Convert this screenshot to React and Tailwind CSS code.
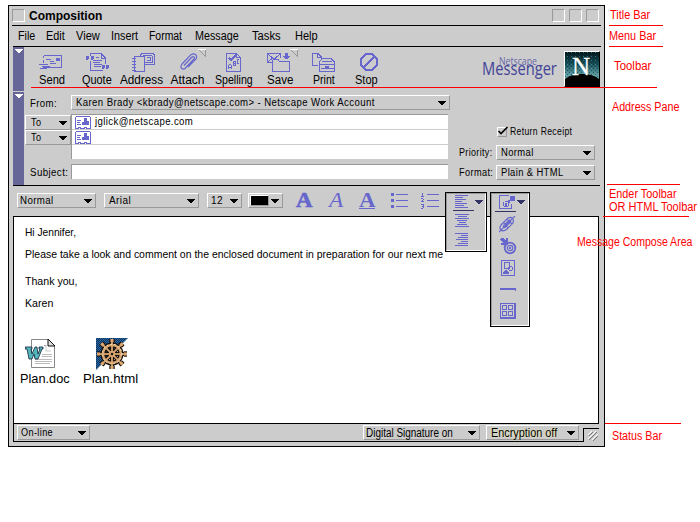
import React, { useLayoutEffect, useRef } from "react";

/* A single line of text condensed or expanded to the width of its box. */
function Fit({ className = "", children }) {
  const box = useRef(null);
  const inner = useRef(null);
  useLayoutEffect(() => {
    const ratio = box.current.clientWidth / inner.current.offsetWidth;
    inner.current.style.transform = `scaleX(${ratio})`;
  }, [children]);
  return (
    <span ref={box} className={`block shrink-0 whitespace-nowrap leading-none ${className}`}>
      <span ref={inner} className="inline-block origin-left align-top">{children}</span>
    </span>
  );
}

const Ico = ({ w, h, className = "", children }) => (
  <svg width={w} height={h} viewBox={`0 0 ${w} ${h}`} fill="none" stroke="#6666cc" shapeRendering="crispEdges" className={`shrink-0 ${className}`}>
    {children}
  </svg>
);

const Arrow = ({ className = "text-black" }) => (
  <svg width="8" height="4" viewBox="0 0 8 4" shapeRendering="crispEdges" className={`shrink-0 ${className}`}>
    <path d="M0 0H8V1H7V2H6V3H5V4H3V3H2V2H1V1H0Z" fill="currentColor" />
  </svg>
);

const Select = ({ className = "", children }) => (
  <div className={`flex shrink-0 items-center justify-between border border-t-white border-l-white border-r-[#999] border-b-[#999] pr-[3px] ${className}`}>
    {children}
    <Arrow />
  </div>
);

const SendIcon = () => (
  <Ico w={23} h={14}>
    <path d="M5 .5H22.5V12.5H4M4.5 1V3M4.5 5V8M7 4.5H12M0 9.5H9M3 11.5H11M1 13.5H8M11 6.5H15M11 8.5H17" />
    <path d="M17 3H21V6H17Z" fill="#6666cc" stroke="none" />
  </Ico>
);
const QuoteIcon = () => (
  <Ico w={24} h={19}>
    <path d="M4.5 3V.5H15L19.5 5V11M15.5 1V5H19M4.5 8V17.5H17M7 7.5H16M7 9.5H14M8 11.5H16M8 13.5H15M10 4.5H13" />
    <path d="M0 3H3V6H2V7H0ZM5 3H8V6H7V7H5ZM16 12H19V15H18V16H16ZM20 12H23V15H22V16H20Z" fill="#6666cc" stroke="none" />
  </Ico>
);
const AddressIcon = () => (
  <Ico w={24} h={19}>
    <path d="M2.5 3.5H12.5V18.5H2.5ZM0 5.5H4M0 8.5H4M0 11.5H4M0 14.5H4M0 17.5H4M8.5 3V2L10 .5H21L22.5 2V11.5H13M11.5 3V2.5H20L20.5 9.5H13" />
    <path d="M14.5 4.5H18.5V7.5H14.5" />
  </Ico>
);
const AttachIcon = () => (
  <Ico w={18} h={18}>
    <path shapeRendering="auto" strokeWidth="1.2" d="M4 12.5L11.5 4.5Q13 3 14 4T13.5 6.5L5.5 15Q3.5 17 1.7 15.5T2 11L11 1.7Q13.5 0 15.5 1.5T16 6L8 14" />
  </Ico>
);
const SpellIcon = () => (
  <Ico w={16} h={19}>
    <path d="M.5 .5H10.5L14.5 4.5V18.5H.5ZM10.5 1V4.5H14" />
    <path strokeWidth="2" d="M3 5L5 7L10 2" />
    <path d="M2.5 16V13L3.5 11.5H4.5L5.5 13V16M3 14.5H5M7.5 8V13M8 8.5H9.5V10H8M8 12.5H9.5V11M13 6.5H11.5V10.5H13" />
  </Ico>
);
const SaveIcon = () => (
  <Ico w={24} h={19}>
    <path d="M14 .5H.5V9.5H5M1 1L6 5.5H8L13 1M1 9L5 5.5M13.5 1V5M5.5 18.5V7.5L7 6.5H11L12.5 8.5H22.5V18.5Z" />
    <path d="M18 0H21V3H23V4H22V5H21V6H18V5H17V4H16V3H18Z" fill="#6666cc" stroke="none" />
  </Ico>
);
const PrintIcon = () => (
  <Ico w={24} h={19}>
    <path d="M6 12.5H.5V.5H6L9.5 4V6M5.5 1V4.5H9M7.5 18.5V9L10 5.5H19L22.5 9V18.5ZM10 8.5H20M8 11.5H22M9 15.5H22" />
    <path d="M13 13H17V15H13Z" fill="#6666cc" stroke="none" />
  </Ico>
);
const StopIcon = () => (
  <Ico w={18} h={18}>
    <path strokeWidth="2" d="M6 1H12L17 6V12L12 17H6L1 12V6ZM4 14L14 4" />
  </Ico>
);

const Tool = ({ icon, label, item, text, flag, nudge = "" }) => (
  <div className={`relative flex shrink-0 flex-col items-center ${item}`}>
    <div className={`flex h-[20px] items-center ${nudge}`}>{icon}</div>
    <Fit className={`mt-[2px] text-[12px] ${text}`}>{label}</Fit>
    {flag && (
      <svg width="9" height="8" viewBox="0 0 9 8" shapeRendering="crispEdges" className="absolute -top-[3px] right-[4px]">
        <path d="M0 .5H8" stroke="#fff" />
        <path d="M1 1L7.5 7.5V1" fill="none" stroke="#999" />
      </svg>
    )}
  </div>
);

const Card = () => (
  <Ico w={16} h={13}>
    <path fill="#fff" d="M1.5 .5H14.5L15.5 1.5V12.5H12L11 11.5H10L9 12.5H6L5 11.5H4L3 12.5H.5V1.5Z" />
    <path d="M2 4.5H6M2 6.5H5M2 8.5H6" />
    <path d="M9 2H12V5H14V9H7V6H9Z" fill="#6666cc" stroke="none" />
  </Ico>
);

const Sunken = () => <div className="size-[13px] border border-t-[#999] border-l-[#999] border-r-white border-b-white" />;

const Strip = ({ className = "" }) => (
  <div className={`flex w-[11px] shrink-0 justify-center bg-[#666699] pt-[2px] ${className}`}>
    <Arrow className="text-white" />
  </div>
);

const NLogo = () => (
  <div className="size-[36px] shrink-0 border border-t-white border-l-white border-r-black border-b-black">
    <svg width="34" height="34" viewBox="0 0 34 34">
      <defs>
        <linearGradient id="sky" x1="0" y1="0" x2="0" y2="1">
          <stop offset="0" stopColor="#001418" />
          <stop offset=".35" stopColor="#164e57" />
          <stop offset=".7" stopColor="#65a5a9" />
        </linearGradient>
        <pattern id="dither" width="4" height="4" patternUnits="userSpaceOnUse">
          <path d="M0 0H1V1H0ZM2 2H3V3H2Z" fill="#003344" />
          <path d="M2 0H3V1H2Z" fill="#669999" />
        </pattern>
      </defs>
      <path fill="url(#sky)" d="M0 0H34V34H0Z" />
      <path fill="url(#dither)" opacity=".6" d="M0 0H34V34H0Z" />
      <path fill="#000" d="M0 27Q6 22 17 22T34 27V34H0Z" />
      <text x="7" y="22.5" fontFamily="Liberation Serif, serif" fontSize="25" fill="#fff" stroke="#fff" strokeWidth=".3">N</text>
    </svg>
  </div>
);

const WordIcon = () => (
  <svg width="31" height="30" viewBox="0 0 31 30">
    <path d="M6.5 .5H23L29.5 7V28.5H6.5Z" fill="#fff" stroke="#888" />
    <path d="M23 0V7H30Z" fill="#ddd" stroke="#111" />
    <path d="M19 6.5H21V12H26M20 7L22 6" stroke="#999" strokeDasharray="1 1" fill="none" />
    <path d="M17 15.5H27M17 17.5H27M10 20.5H27M10 22.5H27M10 24.5H25" stroke="#bbb" />
    <path d="M0 8H7V10H6L7 15L10 8H12L13 15L15 10H14V8H18V10H17L13 20H10L9 15L7 20H4L2 10H0Z" fill="#55b5bd" stroke="#123" strokeWidth=".8" />
  </svg>
);

const SPOKES = [0, 45, 90, 135, 180, 225, 270, 315];
const WheelIcon = () => (
  <svg width="32" height="32" viewBox="0 0 32 32">
    <defs>
      <pattern id="sea" width="2" height="2" patternUnits="userSpaceOnUse">
        <path d="M0 0H2V2H0Z" fill="#003366" />
        <path d="M0 0H1V1H0ZM1 1H2V2H1Z" fill="#336699" />
      </pattern>
    </defs>
    <path d="M0 0H32L0 32Z" fill="url(#sea)" />
    {[["#1a1008", 5, 4], ["#d9a873", 2.4, 1.8]].map(([c, ring, spoke]) => (
      <g key={c} stroke={c} fill="none">
        <circle cx="16" cy="16" r="9" strokeWidth={ring} />
        {SPOKES.map((a) => (
          <g key={a} transform={`rotate(${a} 16 16)`}>
            <path strokeWidth={spoke} d="M16 13V1" />
            <path strokeWidth={spoke + 1.4} d="M16 4V1" />
          </g>
        ))}
        <circle cx="16" cy="16" r="2" strokeWidth={ring} />
      </g>
    ))}
    <circle cx="16" cy="16" r="9.8" fill="none" stroke="#fff0cc" strokeWidth=".8" strokeDasharray="2 2" />
    <circle cx="16" cy="16" r="1.3" fill="#221408" />
  </svg>
);

const AlignIcon = ({ d }) => <Ico w={14} h={14}><path d={d} /></Ico>;

const Note = ({ className, text, children }) => (
  <div className={`flex shrink-0 flex-col ${className}`}>
    <Fit className={`text-[12px] ${text}`}>{children}</Fit>
  </div>
);
const Rule = ({ className }) => <div className={`h-px shrink-0 bg-[#f00] ${className}`} />;

export default function App() {
  return (
    <div className="relative flex h-[522px] w-[700px] overflow-hidden bg-white pt-[5px] pl-[8px] font-['Liberation_Sans',Arial,sans-serif] text-black">
      <div className="flex h-[442px] w-[597px] shrink-0 flex-col border border-black bg-[#ccc]">
        {/* Title bar */}
        <div className="mx-[3px] flex h-[20px] shrink-0 items-center border-b border-black pr-[2px]">
          <Sunken />
          <Fit className="ml-[4px] w-[73px] text-[12px] font-bold">Composition</Fit>
          <div className="ml-auto flex gap-[4px]">
            <Sunken /><Sunken /><Sunken />
          </div>
        </div>

        {/* Menu bar */}
        <div className="mr-[3px] ml-[4px] flex h-[21px] shrink-0 items-center border-b border-black pl-[5px] text-[12px]">
          <Fit className="w-[17px]">File</Fit>
          <Fit className="ml-[11px] w-[19px]">Edit</Fit>
          <Fit className="ml-[11px] w-[24px]">View</Fit>
          <Fit className="ml-[11px] w-[27px]">Insert</Fit>
          <Fit className="ml-[11px] w-[33px]">Format</Fit>
          <Fit className="ml-[13px] w-[44px]">Message</Fit>
          <Fit className="ml-[13px] w-[29px]">Tasks</Fit>
          <Fit className="ml-[14px] w-[23px]">Help</Fit>
        </div>

        {/* Toolbar */}
        <div className="ml-[4px] flex h-[45px] shrink-0">
          <Strip className="h-[44px]" />
          <div className="flex pt-[5px] pl-[6px]">
            <Tool item="w-[44px]" text="w-[26px]" label="Send" icon={<SendIcon />} nudge="-ml-[3px]" />
            <Tool item="w-[45px]" text="w-[30px]" label="Quote" icon={<QuoteIcon />} nudge="ml-[2px]" />
            <Tool item="w-[45px]" text="w-[43px]" label="Address" icon={<AddressIcon />} nudge="ml-[4px]" />
            <Tool item="w-[47px]" text="w-[34px]" label="Attach" icon={<AttachIcon />} flag nudge="ml-[2px]" />
            <Tool item="w-[45px]" text="w-[38px]" label="Spelling" icon={<SpellIcon />} />
            <Tool item="w-[47px]" text="w-[26px]" label="Save" icon={<SaveIcon />} flag nudge="-ml-[1px]" />
            <Tool item="w-[42px]" text="w-[22px]" label="Print" icon={<PrintIcon />} />
            <Tool item="w-[42px]" text="w-[23px]" label="Stop" icon={<StopIcon />} nudge="ml-[5px]" />
          </div>
          <div className="ml-auto flex pt-[4px] pr-[4px] font-['Open_Sans',sans-serif] text-[#434397]">
            <div className="mr-[7px] w-[75px] pt-[4px]">
              <Fit className="ml-[17px] w-[38px] text-[11px] text-[#6666aa]">Netscape</Fit>
              <Fit className="-mt-[7px] w-[75px] text-[18px]">Messenger</Fit>
            </div>
            <NLogo />
          </div>
        </div>

        {/* Address pane */}
        <div className="mr-[4px] ml-[4px] flex h-[94px] shrink-0 border-b border-black text-[10px] tracking-[0.4px]">
          <Strip className="h-[93px]" />
          <div className="ml-[1px] w-[46px] shrink-0">
            <div className="flex h-[23px] items-center pl-[5px]"><Fit className="w-[27px]">From:</Fit></div>
            <Select className="h-[15px] w-full pr-[2px] pl-[5px]"><Fit className="w-[10px]">To</Fit></Select>
            <Select className="h-[15px] w-full pr-[2px] pl-[5px]"><Fit className="w-[10px]">To</Fit></Select>
            <div className="mt-[20px] flex h-[16px] items-center pl-[5px]"><Fit className="w-[38px]">Subject:</Fit></div>
          </div>
          <div className="w-[379px] shrink-0 pt-[3px]">
            <Select className="h-[15px] w-[379px] pl-[4px]">
              <Fit className="w-[299px]">Karen Brady &lt;kbrady@netscape.com&gt; - Netscape Work Account</Fit>
            </Select>
            <div className="mt-[4px] h-[45px] w-[377px] border-t border-l border-[#999] bg-white">
              <div className="flex h-[15px] items-center border-b border-[#ccc] pl-[3px]">
                <Card /><Fit className="ml-[4px] w-[98px]">jglick@netscape.com</Fit>
              </div>
              <div className="flex h-[15px] items-center border-b border-[#ccc] pl-[3px]"><Card /></div>
            </div>
            <div className="mt-[5px] h-[15px] w-[377px] border-t border-l border-[#999] bg-white" />
          </div>
          <div className="ml-[9px] flex w-[136px] flex-col pt-[33px]">
            <div className="flex h-[13px] items-center pl-[38px]">
              <div className="relative size-[10px] border border-t-white border-l-white border-r-[#999] border-b-[#999]">
                <svg width="12" height="10" viewBox="0 0 12 10" className="absolute -top-[2px] -left-px"><path d="M1.5 5L4 7.5L10.5 1" fill="none" stroke="#000" strokeWidth="1.6" /></svg>
              </div>
              <Fit className="ml-[3px] w-[62px]">Return Receipt</Fit>
            </div>
            <div className="mt-[7px] flex items-center justify-between">
              <Fit className="w-[34px]">Priority:</Fit>
              <Select className="h-[15px] w-[99px] pl-[4px]"><Fit className="w-[33px]">Normal</Fit></Select>
            </div>
            <div className="mt-[5px] flex items-center justify-between">
              <Fit className="w-[34px]">Format:</Fit>
              <Select className="h-[15px] w-[99px] pl-[4px]"><Fit className="w-[63px]">Plain &amp; HTML</Fit></Select>
            </div>
          </div>
        </div>

        {/* Formatting toolbar */}
        <div className="ml-[4px] flex h-[30px] shrink-0 items-start pt-[7px] pl-[4px] text-[10px] tracking-[0.4px]">
          <Select className="h-[15px] w-[79px] pl-[2px]"><Fit className="w-[34px]">Normal</Fit></Select>
          <Select className="ml-[8px] h-[15px] w-[95px] pl-[4px]"><Fit className="w-[22px]">Arial</Fit></Select>
          <Select className="ml-[8px] h-[15px] w-[35px] pl-[3px]"><Fit className="w-[12px]">12</Fit></Select>
          <Select className="ml-[6px] h-[15px] w-[35px] pl-[1px]"><span className="h-[11px] w-[19px] border border-t-white border-l-white border-[#999] bg-black" /></Select>
          <div className="ml-[13px] flex font-['Liberation_Serif',serif] text-[20px] tracking-normal text-[#6666cc]">
            <Fit className="-mt-[3px] w-[16px] font-bold [-webkit-text-stroke:0.6px_#6666cc]">A</Fit>
            <Fit className="-mt-[3px] ml-[17px] w-[14px] italic">A</Fit>
            <div className="-mt-[3px] ml-[16px] h-[19px] w-[16px] border-b border-[#6666cc]"><Fit className="w-[16px] font-bold">A</Fit></div>
          </div>
          <Ico w={17} h={15} className="ml-[16px]">
            <path d="M0 0H3V3H0ZM0 6H3V9H0ZM0 12H3V15H0Z" fill="#6666cc" stroke="none" />
            <path d="M5 1.5H17M5 7.5H17M5 13.5H17" />
          </Ico>
          <Ico w={18} h={16} className="ml-[13px]">
            <path d="M6 1.5H18M6 7.5H18M6 13.5H18M1 .5H2M1.5 1V3M0 3.5H3M0 5.5H2M2.5 6V7M1.5 7V8M0 8.5H3M0 11.5H3M1 13.5H2M2.5 12V15M0 15.5H2" />
          </Ico>
        </div>

        {/* Message body and status bar */}
        <div className="ml-[4px] flex h-[208px] w-[586px] shrink-0 flex-col border border-black bg-white pl-[11px] text-[11px]">
          <Fit className="mt-[10px] w-[51px]">Hi Jennifer,</Fit>
          <Fit className="mt-[11px] w-[418px]">Please take a look and comment on the enclosed document in preparation for our next me</Fit>
          <Fit className="mt-[16px] w-[52px]">Thank you,</Fit>
          <Fit className="mt-[11px] w-[28px]">Karen</Fit>
          <div className="-ml-[5px] mt-[29px] flex gap-[13px] text-[13px]">
            <div className="flex w-[50px] flex-col">
              <div className="h-[34px] pt-px pl-[5px]"><WordIcon /></div>
              <Fit className="w-[50px]">Plan.doc</Fit>
            </div>
            <div className="flex w-[55px] flex-col">
              <div className="h-[34px] pl-[13px]"><WheelIcon /></div>
              <Fit className="w-[55px]">Plan.html</Fit>
            </div>
          </div>
        </div>
        <div className="ml-[4px] flex h-[18px] shrink-0">
          <div className="flex w-[570px] items-start border-b border-l border-black pt-px pl-[3px] text-[10px]">
            <Select className="h-[15px] w-[73px] pl-[3px]"><Fit className="w-[32px] tracking-[0.4px]">On-line</Fit></Select>
            <Select className="ml-[273px] h-[15px] w-[117px] pl-[2px]"><Fit className="w-[87px] text-[12px]">Digital Signature on</Fit></Select>
            <Select className="ml-[6px] h-[15px] w-[93px] pl-[4px]"><Fit className="w-[66px] text-[12px] [text-shadow:0_0_2px_#ffffaa]">Encryption off</Fit></Select>
          </div>
          <div className="mt-[4px] flex h-[14px] w-[16px] border-t border-l border-black">
            <svg width="15" height="13" viewBox="0 0 15 13" fill="none">
              <path d="M4 6L8 2M4 10L12 2M8 11L14 5" stroke="#fff" />
              <path d="M5 7L9 3M5 11L13 3M9 12L14 7" stroke="#777" />
            </svg>
          </div>
        </div>
      </div>

      {/* Callouts */}
      <div className="relative z-10 flex w-[95px] shrink-0 flex-col text-[#f00]">
        <Note className="h-[20px] pt-[4px] pl-[5px]" text="w-[40px]">Title Bar</Note>
        <Rule className="ml-[4px] w-[54px]" />
        <Note className="h-[20px] pt-[4px] pl-[4px]" text="w-[47px]">Menu Bar</Note>
        <Rule className="ml-[4px] w-[54px]" />
        <Note className="h-[41px] pt-[13px] pl-[9px]" text="w-[37px]">Toolbar</Note>
        <Note className="h-[96px] pt-[13px] pl-[7px]" text="w-[67px]">Address Pane</Note>
        <Rule className="ml-[2px] w-[73px]" />
        <Note className="h-[16px] pt-[3px] pl-[4px]" text="w-[68px]">Ender Toolbar</Note>
        <Note className="h-[15px] pt-0 pl-[4px]" text="w-[88px]">OR HTML Toolbar</Note>
        <Rule className="-ml-[2px] w-[86px]" />
        <Note className="-ml-[28px] h-[206px] pt-[19px]" text="w-[115px]">Message Compose Area</Note>
        <Rule className="w-[76px]" />
        <Note className="h-[20px] pt-[6px] pl-[7px]" text="w-[50px]">Status Bar</Note>
      </div>
      <div className="absolute top-[87px] left-[31px] h-px w-[626px] bg-[#f00]" />

      {/* Alignment pop-up */}
      <div className="absolute top-[192px] left-[445px] h-[60px] w-[42px] border border-black bg-[#ccc]">
        <div className="flex h-full flex-col border border-t-[#999] border-l-[#999] border-r-white border-b-white pl-[7px]">
          <div className="-ml-[1px] flex h-[17px] w-[21px] shrink-0 border-b border-[#333366] pt-px pl-[2px]">
            <AlignIcon d="M0 .5H13M0 2.5H8M0 4.5H11M0 6.5H7M0 8.5H12M0 10.5H9M0 12.5H13" />
            <Arrow className="mt-[5px] ml-[6px] text-[#333366]" />
          </div>
          <div className="pt-[3px] pl-px"><AlignIcon d="M0 .5H14M3 2.5H12M0 4.5H14M2 6.5H12M4 8.5H11M2 10.5H12M0 12.5H14" /></div>
          <div className="mt-[5px] pl-px"><AlignIcon d="M0 .5H13M6 2.5H13M3 4.5H13M1 6.5H13M6 8.5H13M3 10.5H13M0 12.5H13" /></div>
        </div>
      </div>

      {/* Insert object pop-up */}
      <div className="absolute top-[192px] left-[490px] h-[135px] w-[40px] border border-black bg-[#ccc]">
        <div className="flex h-full flex-col border border-t-[#999] border-l-[#999] border-r-white border-b-white pl-[3px]">
          <div className="flex h-[18px] w-[21px] shrink-0 border-b border-[#333366] pt-px pl-[4px]">
            <Ico w={17} h={15}>
              <path d="M10 .5H.5V13.5H12.5V9M5.5 6.5H9M4.5 7V11M5 11.5H9M9.5 8V11M7 8.5H8" />
              <path d="M11 1H16V6H11ZM6 8H8V11H6ZM9 5H11V8H9Z" fill="#6666cc" stroke="none" />
            </Ico>
            <Arrow className="mt-[5px] ml-[1px] text-[#333366]" />
          </div>
          <Ico w={17} h={17} className="mt-[4px] ml-[4px]">
            <g shapeRendering="auto" strokeWidth="1.2">
              <path d="M2 9L9 2Q12 .5 13.5 2.5T14 7L8 13Q4 16 2 14T2 9ZM4.5 9.5L10.5 4Q12 4 11.5 6L6.5 11Q4 12.5 4.5 9.5M0 16L16 0M5 7L9 12M8 3L13 8" />
            </g>
          </Ico>
          <Ico w={17} h={17} className="mt-[5px] ml-[5px]">
            <g shapeRendering="auto">
              <circle cx="10" cy="10" r="5.3" strokeWidth="1.8" /><circle cx="10" cy="10" r="2.7" strokeWidth="1.2" />
            </g>
            <path d="M9 9H11V11H9ZM1 0H3L5 2H6V0H8V7H1V5H3V4L0 2Z" fill="#6666cc" stroke="none" />
          </Ico>
          <Ico w={14} h={16} className="mt-[5px] ml-[6px]">
            <path d="M.5 .5H13.5V15.5H.5ZM3.5 2.5H8.5V8.5H3.5Z" />
            <circle cx="9.5" cy="8.5" r="2" />
            <path d="M2 14V12H3V11H4V10H6V11H7V12H8V14Z" fill="#6666cc" stroke="none" />
          </Ico>
          <Ico w={17} h={3} className="mt-[12px] ml-[5px]"><path d="M0 0H16V3H15V2H0Z" fill="#6666cc" stroke="none" /></Ico>
          <Ico w={16} h={16} className="mt-[12px] ml-[5px]">
            <path d="M.5 .5H14.5V14.5H.5ZM15.5 0V16M0 15.5H16M2.5 2.5H6.5V6.5H2.5ZM8.5 2.5H12.5V6.5H8.5ZM2.5 8.5H6.5V12.5H2.5ZM8.5 8.5H12.5V12.5H8.5Z" />
          </Ico>
        </div>
      </div>
    </div>
  );
}
